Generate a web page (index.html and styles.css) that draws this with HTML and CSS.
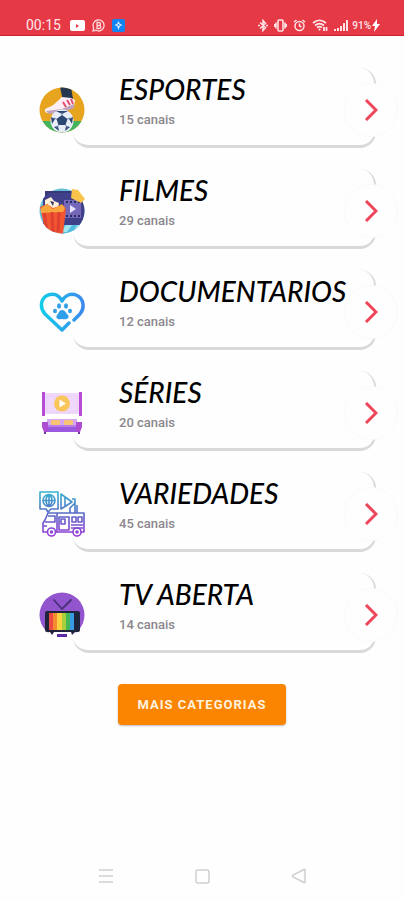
FILE: index.html
```html
<!DOCTYPE html>
<html lang="pt-BR">
<head>
<meta charset="utf-8">
<meta name="viewport" content="width=device-width, initial-scale=1">
<title>Categorias</title>
<link rel="stylesheet" href="styles.css">
</head>
<body>
<header class="status">
  <div class="status-group">
    <time class="clock">00:15</time>
    <svg width="15" height="12" viewBox="0 0 15 12"><rect x="0" y="1" width="15" height="11" rx="2" fill="#fff"/><path d="M6 5l3 2-3 2z" fill="#e63946"/></svg>
    <svg width="13" height="13" viewBox="0 0 13 13" fill="none" stroke="#ffd9dc" stroke-width="1.300"><path d="M1 12l.7-3A5.500 5.500 0 1 1 4 11.300z"/><path d="M5 3.500h2a1.400 1.400 0 0 1 0 3H5zM5 6.500h2.300a1.400 1.400 0 0 1 0 3H5z"/></svg>
    <svg width="13" height="13" viewBox="0 0 13 13"><rect width="13" height="13" rx="2" fill="#1484f5"/><path d="M6.500 2l1.300 2.700L10.500 6 7.800 7.300 6.500 11 5.200 7.300 2.500 6l2.700-1.300z" fill="#d9f0ff"/><circle cx="6.500" cy="6" r="1" fill="#1484f5"/></svg>
  </div>
  <div class="status-group status-right">
    <svg width="10" height="13" viewBox="0 0 10 13" fill="none" stroke="#ffe3e5" stroke-width="1.500"><path d="M2 3.500l5.500 5L5 11.500v-10l2.500 3L2 9.500M0 6.500h2M8 6.500h2"/></svg>
    <svg width="13" height="13" viewBox="0 0 13 13" fill="none" stroke="#ffe3e5" stroke-width="1.600"><rect x="4" y="1" width="5" height="11" rx="1"/><path d="M2 3.500v6M11 3.500v6M.5 5v3M12.500 5v3"/></svg>
    <svg width="13" height="13" viewBox="0 0 13 13" fill="none" stroke="#ffe3e5" stroke-width="1.500"><circle cx="6.500" cy="7" r="4.500"/><path d="M6.500 4.500V7l2 1M1 3l2.500-2M12 3L9.500 1"/></svg>
    <svg width="16" height="13" viewBox="0 0 16 13" fill="none" stroke="#ffe3e5" stroke-width="1.800"><path d="M1 4c4-3.500 9-3.500 13 0M3 6.500c3-2.500 6-2.500 9 0M5 8.500c2-1.300 3-1.300 5 0"/><path d="M7.500 9.500v2M12 8v4M14.500 8v4"/></svg>
    <svg width="15" height="13" viewBox="0 0 15 13" fill="#ffe3e5"><path d="M0 10h2v2H0zM3 9h2v3H3zM6 7h2v5H6zM9 4h2v8H9zM12 1h2v11h-2z"/></svg>
    <span class="battery">91%</span>
    <svg class="bolt" width="8" height="13" viewBox="0 0 8 13"><path d="M5 0L0 7h3l-1 6 6-8H5z" fill="#fff"/></svg>
  </div>
</header>

<main class="content">
  <ul class="categories">
    <li class="category">
      <article class="card"><h2 class="title">ESPORTES</h2><p class="count">15 canais</p></article>
      <span class="badge">
        <svg width="46" height="46" viewBox="0 0 46 46">
          <defs><clipPath id="disc"><circle cx="23" cy="23" r="22.500"/></clipPath></defs>
          <g clip-path="url(#disc)"><rect width="46" height="46" fill="#e7a41f"/><path d="M0 34h46v12H0z" fill="#43b35d"/>
          <path d="M21 0h11l2 12-10 2z" fill="#25384f"/><path d="M23 10l9 1 4 2-1 7-9 3-18 3c-3-1-3-4 0-5 7-2 10-7 15-11z" fill="#fbeef4"/><path d="M7 24l16-2 12-5v4l-10 4-15 2z" fill="#bfa3bd"/><path d="M24 15l3 5M28 13l3 5M32 12l2 5" stroke="#e44d72" stroke-width="2"/>
          <circle cx="23" cy="34" r="11.500" fill="#e9edf8"/><path d="M23 28l5.500 4-2 6h-7l-2-6zM17 24h12l-6 3zM12 30l4 2-3 5zM34 30l-4 2 3 5zM15 40l4-1 1 5zM31 40l-4-1-1 5z" fill="#2b4772"/><path d="M23 28v-3M17.500 32l-3-1M28.500 32l3-1M19.500 38l-2 3M26.500 38l2 3" stroke="#627b9e"/></g>
        </svg>
      </span>
      <button class="go" type="button" aria-label="Abrir Esportes"><svg width="14" height="22" viewBox="0 0 14 22"><path d="M2 1l10 10L2 21"/></svg></button>
    </li>
    <li class="category">
      <article class="card"><h2 class="title">FILMES</h2><p class="count">29 canais</p></article>
      <span class="badge">
        <svg width="46" height="46" viewBox="0 0 46 46">
          <circle cx="23" cy="23" r="22.500" fill="#62bfd7"/>
          <path d="M6 3h29v12H6z" fill="#383878"/>
          <g clip-path="url(#disc)"><path d="M4 5h42v32H4z" fill="#40408a"/><path d="M22 37h24v9H22z" fill="#52bddd"/><path d="M27 37l6 0-5 7h-6zM38 37h5l-3 6h-5z" fill="#a1e4f1"/><path d="M25 12h17v18H25z" fill="#7668b9"/><path d="M27 14h14M27 28h14" stroke="#292c62" stroke-width="2" stroke-dasharray="2 2"/><path d="M31 17l6 4-6 4z" fill="#e8e4ff"/></g>
          <path d="M33 1l6 1 7 9-4 4-10-5z" fill="#f7c34a"/>
          <path d="M6 12l6-3 3 4 5 2-1 5-13 0z" fill="#fff0d8"/><path d="M11 13l4 1-1 4z" fill="#32366c"/>
          <g clip-path="url(#disc)"><path d="M1 19l7-3 6 4 10-3 3 4-3 25H7z" fill="#f25532"/><path d="M2 20l6-4 6 5 9-5 3 4-2 4-22 1z" fill="#f9a53e"/><path d="M5 25l3 18M13 24l1 21M20 24l-1 20" stroke="#e0402f" stroke-width="3"/></g>
        </svg>
      </span>
      <button class="go" type="button" aria-label="Abrir Filmes"><svg width="14" height="22" viewBox="0 0 14 22"><path d="M2 1l10 10L2 21"/></svg></button>
    </li>
    <li class="category">
      <article class="card"><h2 class="title">DOCUMENTARIOS</h2><p class="count">12 canais</p></article>
      <span class="badge">
        <svg width="46" height="46" viewBox="0 0 46 46">
          <defs><linearGradient id="water" x1="0" y1="0" x2="1" y2="0"><stop stop-color="#12cce8"/><stop offset="1" stop-color="#3b8bec"/></linearGradient></defs>
          <path d="M30 34l-7 7L6 25C0 18 2 9 9 6c6-2 11 0 14 6 3-6 9-8 14-6 8 3 9 13 4 19l-6 6" fill="none" stroke="url(#water)" stroke-width="3.500" stroke-linecap="round" stroke-linejoin="round"/>
          <g fill="#309ee8"><ellipse cx="20" cy="17" rx="2" ry="2.700"/><ellipse cx="27" cy="17" rx="2" ry="2.700"/><ellipse cx="16" cy="22" rx="2" ry="2.300"/><ellipse cx="31" cy="22" rx="2" ry="2.300"/><path d="M23 21c3 0 4 3 6 5 2 3-1 5-6 4-4 1-7-1-5-4 2-2 2-5 5-5z"/></g>
        </svg>
      </span>
      <button class="go" type="button" aria-label="Abrir Documentarios"><svg width="14" height="22" viewBox="0 0 14 22"><path d="M2 1l10 10L2 21"/></svg></button>
    </li>
    <li class="category">
      <article class="card"><h2 class="title">SÉRIES</h2><p class="count">20 canais</p></article>
      <span class="badge">
        <svg width="46" height="46" viewBox="0 0 46 46">
          <path d="M5 3h36v21H5z" fill="#f0d9fc"/><path d="M8 6h30v16H8z" fill="none" stroke="#ead0f5"/><path d="M4.500 2v24M41.500 2v24" stroke="#b64bd5" stroke-width="3"/>
          <circle cx="23" cy="13.500" r="8" fill="#fac65b"/><path d="M20.500 9.500l6.500 4-6.500 4z" fill="#fff"/>
          <path d="M8 29h30v8H8z" fill="#d6a8f4"/><rect x="12" y="30" width="9" height="5" rx="1" fill="#f8c373"/><rect x="25" y="30" width="9" height="5" rx="1" fill="#f8c373"/><path d="M9 35h28v7H9z" fill="#9a59df"/><path d="M9 36h28" stroke="#ba7ce9" stroke-width="2"/><path d="M3 32h6v10H5l-2-5zM37 32h6v5l-2 5h-4z" fill="#ad4cd1"/><path d="M6 42v2M40 42v2" stroke="#6f399e" stroke-width="2"/>
        </svg>
      </span>
      <button class="go" type="button" aria-label="Abrir Séries"><svg width="14" height="22" viewBox="0 0 14 22"><path d="M2 1l10 10L2 21"/></svg></button>
    </li>
    <li class="category">
      <article class="card"><h2 class="title">VARIEDADES</h2><p class="count">45 canais</p></article>
      <span class="badge">
        <svg width="46" height="46" viewBox="0 0 46 46">
          <defs><linearGradient id="signal" gradientUnits="userSpaceOnUse" x1="0" y1="0" x2="0" y2="46"><stop stop-color="#35b7cf"/><stop offset=".5" stop-color="#5867c5"/><stop offset="1" stop-color="#9a38d8"/></linearGradient></defs>
          <g fill="none" stroke="url(#signal)" stroke-width="1.600" stroke-linejoin="round"><path d="M1 1h18v17h-7l-3 3-2-3H1z"/><circle cx="10" cy="9.500" r="6"/><path d="M4 9.500h12M10 3.500v12M10 3.500c-4 3-4 9 0 12M10 3.500c4 3 4 9 0 12M22 3l11 8-11 7zM26 6v9M33 8h3v4l-5 5v5M36 12v10M38 14v8"/>
          <path d="M18 22h27v19h-3M34 41H17M8 41H4v-9l2-3 3-7h9v19M6 31h10v-6H9M4 35h4M20 26h10v13H20zM22 28h4v5h-4zM33 26h4v5h-4zM39 26h4v5h-4zM32 34h12M32 37h12"/><circle cx="12.500" cy="41" r="4"/><circle cx="38" cy="41" r="4"/><circle cx="12.500" cy="41" r="1"/><circle cx="38" cy="41" r="1"/></g>
        </svg>
      </span>
      <button class="go" type="button" aria-label="Abrir Variedades"><svg width="14" height="22" viewBox="0 0 14 22"><path d="M2 1l10 10L2 21"/></svg></button>
    </li>
    <li class="category">
      <article class="card"><h2 class="title">TV ABERTA</h2><p class="count">14 canais</p></article>
      <span class="badge">
        <svg width="46" height="46" viewBox="0 0 46 46">
          <circle cx="23" cy="23" r="22.500" fill="#9355cd"/><path d="M9 40h28l-4 6H13z" fill="#fefefe"/><path d="M15 8l8 9 9-9" fill="none" stroke="#493079" stroke-width="1.800" stroke-linecap="round"/>
          <path d="M11 40h4l-2 3zM32 40h4l-3 3z" fill="#27203f"/><rect x="6" y="19" width="35" height="21" rx="2" fill="#20233c"/>
          <path d="M10 21h4v17h-4z" fill="#ec4a43"/><path d="M14 21h4v17h-4z" fill="#f48d31"/><path d="M18 21h5v17h-5z" fill="#f9d23e"/><path d="M23 21h4v17h-4z" fill="#a9cf3e"/><path d="M27 21h4v17h-4z" fill="#44b756"/><path d="M31 21h4v17h-4z" fill="#369be2"/><path d="M18 42h10v3H18z" fill="#5c2aa5"/>
        </svg>
      </span>
      <button class="go" type="button" aria-label="Abrir TV Aberta"><svg width="14" height="22" viewBox="0 0 14 22"><path d="M2 1l10 10L2 21"/></svg></button>
    </li>
  </ul>
  <button class="more" type="button">MAIS CATEGORIAS</button>
</main>

<nav class="system-nav" aria-label="Sistema">
  <button type="button" aria-label="Recentes"><svg width="16" height="16" viewBox="0 0 16 16" stroke-width="1.500"><path d="M1 2h14M1 8h14M1 14h14"/></svg></button>
  <button type="button" aria-label="Início"><svg width="16" height="16" viewBox="0 0 16 16" stroke-width="1.500"><rect x="2" y="2" width="13" height="13" rx="2"/></svg></button>
  <button type="button" aria-label="Voltar"><svg width="16" height="16" viewBox="0 0 16 16" stroke-width="1.500"><path d="M15 2v12q0 1-1 .5L3 9q-1-1 0-2l11-5.500q1-.5 1 .5z"/></svg></button>
</nav>
</body>
</html>
```
FILE: styles.css
```css
* {
  box-sizing: border-box;
}

body {
  margin: 0;
  min-height: 100vh;
  display: flex;
  flex-direction: column;
  background: #fefefe;
  font-family: Roboto, "Liberation Sans", sans-serif;
}

h2,
p,
ul {
  margin: 0;
  padding: 0;
}

button {
  padding: 0;
  border: 0;
  font-family: inherit;
}

.status {
  display: flex;
  justify-content: space-between;
  height: 36px;
  padding: 16px 24px 0 26px;
  background: #e63946;
  border-bottom: 1px solid #d21f31;
  color: #ffe8ea;
}

.status-group {
  display: flex;
  align-items: center;
  gap: 7px;
  height: 18px;
}

.status-right {
  gap: 6px;
}

.clock {
  margin-right: 2px;
  font-size: 14px;
  font-weight: 400;
}

.battery {
  margin-left: -3px;
  font-size: 10px;
  font-weight: 500;
}

.bolt {
  margin-left: -5px;
}

.content {
  flex: 1;
  display: flex;
  flex-direction: column;
  align-items: center;
  padding-top: 32px;
}

.categories {
  width: 100%;
  display: grid;
  gap: 21px;
  list-style: none;
}

.category {
  display: grid;
  grid-template-columns: 54px 1fr 54px;
  align-items: start;
  padding: 0 6px 0 35px;
}

.card {
  grid-area: 1 / 1 / 2 / 4;
  min-height: 80px;
  margin: 0 22px 0 38px;
  padding: 3px 0 10px 46px;
  background: #fefefe;
  border: solid #d9d9d9;
  border-width: 0 2px 3px 0;
  border-radius: 16px;
}

.title {
  font-family: Lato, "Liberation Sans", sans-serif;
  font-size: 28px;
  font-style: italic;
  font-weight: 500;
  line-height: 36px;
  white-space: nowrap;
  color: #000;
}

.count {
  margin-top: 3px;
  font-size: 13px;
  font-weight: 500;
  line-height: 20px;
  color: #8b868d;
}

.badge,
.go {
  grid-row: 1;
  display: grid;
  place-items: center;
  width: 54px;
  height: 54px;
  margin-top: 15px;
  border-radius: 50%;
  background: #fefefe;
}

.badge {
  grid-column: 1;
}

.go {
  grid-column: 3;
  border: 1px solid #fafafa;
}

.go path {
  fill: none;
  stroke: #ed465a;
  stroke-width: 3;
}

.title,
.count {
  position: relative;
  z-index: 1;
}

.more {
  padding: 0 20px;
  height: 41px;
  margin-top: 31px;
  border-radius: 4px;
  background: #fb8500;
  box-shadow: 0 1px 2px #bbb;
  color: #fff2df;
  font-size: 13px;
  font-weight: 700;
  line-height: 20px;
  letter-spacing: 1px;
}

.system-nav {
  display: flex;
  justify-content: space-around;
  padding: 0 58px;
}

.system-nav button {
  display: grid;
  place-items: center;
  width: 48px;
  height: 48px;
  background: none;
}

.system-nav svg {
  fill: none;
  stroke: #cfcfcf;
}
```
